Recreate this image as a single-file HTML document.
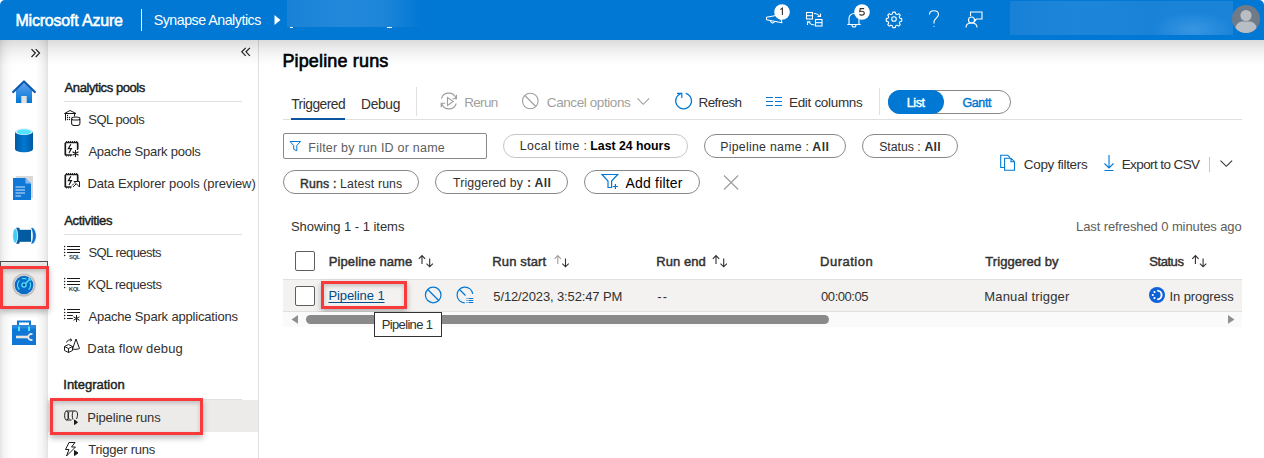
<!DOCTYPE html>
<html><head><meta charset="utf-8">
<style>
html,body{margin:0;padding:0;}
body{width:1264px;height:458px;overflow:hidden;position:relative;background:#fff;font-family:"Liberation Sans",sans-serif;}
.a{position:absolute;}
.t{position:absolute;white-space:nowrap;}
svg{position:absolute;overflow:visible;}
.pill{position:absolute;box-sizing:border-box;border:1px solid #8a8886;border-radius:12px;}
</style></head><body>

<!-- HEADER -->
<div class="a" style="left:0;top:0;width:1264px;height:40px;background:#0078d4;border-radius:5px 5px 0 0;"></div>
<div class="a" style="left:141px;top:9px;width:1px;height:22px;background:#fff;"></div>
<svg style="left:0;top:0" width="1264" height="40">
  <path d="M274.5 15 L280.5 20 L274.5 25 Z" fill="#fff"/>
</svg>
<div class="a" style="left:287px;top:0;width:136px;height:27px;background:linear-gradient(90deg,#1a82d6 0%,#2288da 40%,#1e86d9 70%,#0078d4 100%);"></div>
<div class="a" style="left:290px;top:27px;width:3px;height:1px;background:#fff;"></div>
<div class="a" style="left:387px;top:27px;width:5px;height:1px;background:#fff;"></div>
<div class="a" style="left:1010px;top:1px;width:223px;height:34px;background:radial-gradient(ellipse 40px 18px at 82% 85%,rgba(80,165,235,.55),rgba(80,165,235,0)),linear-gradient(90deg,#1880d6 0%,#1e86da 30%,#1a83d8 60%,#1b84d8 100%);"></div>
<!-- avatar -->
<svg style="left:1232px;top:5px" width="28" height="28" viewBox="0 0 28 28">
  <circle cx="14" cy="14" r="14" fill="#6f7b89"/>
  <circle cx="14" cy="10.5" r="5.6" fill="#b9bec4"/>
  <path d="M3.5 23 C4 18 8 16.5 11 16.5 L17 16.5 C20 16.5 24 18 24.5 23 C22 26.5 18 28 14 28 C10 28 6 26.5 3.5 23 Z" fill="#b9bec4"/>
</svg>
<!-- header icons -->
<svg style="left:0;top:0" width="1264" height="40" fill="none" stroke="#fff" stroke-width="1.1">
  <!-- megaphone -->
  <path d="M766.5 17.3 L780 14.8 L781.9 22.8 L766.5 19.8 Z" stroke-linejoin="round"/>
  <path d="M770.6 21 A2 2 0 0 0 774.4 21.8"/>
  <!-- switch directory -->
  <rect x="806.5" y="12.5" width="6" height="6.5"/>
  <path d="M806.5 15.7 H812.5"/>
  <rect x="815.5" y="19.5" width="6.5" height="6.5"/>
  <path d="M815.5 22.7 H822"/>
  <path d="M814 13.5 Q817 13 819.5 16 M820.5 13.5 V16.5 H817.5"/>
  <path d="M814.5 25 Q811 25 808.5 22 M807.5 25 V21.8 H810.5"/>
  <!-- bell -->
  <path d="M847.3 24.5 H860.7 M849 24.5 V18.5 A5 5 0 0 1 859 18.5 V24.5"/>
  <path d="M852 25 A2 2 0 0 0 856 25"/>
  <!-- gear -->
  <circle cx="894" cy="19" r="2.3"/>
  <path d="M892.6 11.2 L895.4 11.2 L895.9 13.2 L897.6 14 L899.4 12.9 L901.1 14.6 L900 16.4 L900.8 18.1 L902.8 18.6 L902.8 21.4 L900.8 21.9 L900 23.6 L901.1 25.4 L899.4 27.1 L897.6 26 L895.9 26.8 L895.4 28.8 L892.6 28.8 L892.1 26.8 L890.4 26 L888.6 27.1 L886.9 25.4 L888 23.6 L887.2 21.9 L885.2 21.4 L885.2 18.6 L887.2 18.1 L888 16.4 L886.9 14.6 L888.6 12.9 L890.4 14 L892.1 13.2 Z" transform="translate(894 19) scale(0.88) translate(-894 -19)" stroke-linejoin="round" stroke-width="1.25"/>
  <!-- help -->
  <path d="M929.5 14.5 C929.5 12 931.5 10.8 934 10.8 C936.7 10.8 938.5 12.5 938.5 14.6 C938.5 17.5 934 18.3 934 22 V23.6"/>
  <circle cx="934" cy="26.3" r="0.6" fill="#fff" stroke="none"/>
  <!-- feedback -->
  <path d="M970.5 16 V12 H982 V19 H976.5 L975 21 V19"/>
  <circle cx="971.5" cy="20" r="3"/>
  <path d="M966 27.5 C966 24.5 968.5 23 971.5 23 C974.5 23 977 24.5 977 27.5"/>
</svg>
<!-- badges -->
<svg style="left:0;top:0" width="1264" height="40">
  <circle cx="782" cy="12" r="7.8" fill="#fff"/>
  <circle cx="862" cy="12" r="7.8" fill="#fff"/>
</svg>
<svg style="left:0;top:0" width="1264" height="40"><path d="M780.4 9.6 L782.4 8.1 V14.9" fill="none" stroke="#323130" stroke-width="1.1"/></svg>
<svg style="left:0;top:0" width="1264" height="40"><path d="M864.1 8.6 H860.2 L859.8 11.6 C860.4 11.3 861 11.2 861.6 11.2 C863.2 11.2 864.3 12 864.3 13.2 C864.3 14.5 863.1 15.1 861.6 15.1 C860.8 15.1 860 14.9 859.4 14.6" fill="none" stroke="#323130" stroke-width="1.1"/></svg>

<!-- LEFT RAIL -->
<div class="a" style="left:0;top:40px;width:48px;height:418px;background:linear-gradient(90deg,#e4e4e4 0px,#f4f4f4 4px,#fcfcfc 9px,#fff 14px,#fff 36px,#f6f6f6 42px,#e8e8e8 47px,#dedede 48px);"></div>
<svg style="left:0;top:40px" width="48" height="418">
  <!-- » -->
  <path d="M31.5 49.2 L35.3 53.1 L31.5 57 M35.7 49.2 L39.5 53.1 L35.7 57" transform="translate(0,-40)" fill="none" stroke="#201f1e" stroke-width="1.2"/>
</svg>
<!-- home -->
<svg style="left:11px;top:79px" width="26" height="25" viewBox="0 0 26 25">
  <defs><linearGradient id="gh" x1="0" y1="0" x2="0" y2="1"><stop offset="0" stop-color="#5ea0ef"/><stop offset="1" stop-color="#0078d4"/></linearGradient></defs>
  <path d="M5 11 L13 4 L21 11 V24 H5 Z" fill="url(#gh)"/>
  <path d="M2.2 13 L13 2.5 L23.8 13" fill="none" stroke="#0c5aae" stroke-width="2.3" stroke-linejoin="round" stroke-linecap="round"/>
  <rect x="10.3" y="17" width="5.4" height="7" fill="#e2e2e2"/>
</svg>
<!-- database -->
<svg style="left:14px;top:127px" width="20" height="26" viewBox="0 0 20 26">
  <defs><linearGradient id="gd" x1="0" y1="0" x2="1" y2="0"><stop offset="0" stop-color="#005ba1"/><stop offset="0.5" stop-color="#0078d4"/><stop offset="1" stop-color="#005ba1"/></linearGradient></defs>
  <path d="M1 4.5 V22 C1 24 5 25.2 10 25.2 C15 25.2 19 24 19 22 V4.5 Z" fill="url(#gd)"/>
  <ellipse cx="10" cy="4.5" rx="9" ry="3.6" fill="#e8f3fb"/>
  <ellipse cx="10" cy="4.8" rx="7.3" ry="2.6" fill="#50e6ff"/>
</svg>
<!-- document -->
<svg style="left:12px;top:175px" width="23" height="26" viewBox="0 0 23 26">
  <path d="M4 1 H21 V23 H4 Z" fill="#d9d9d9"/>
  <path d="M1 3 H13.5 L19 8.5 V25 H1 Z" fill="#0f78d6"/>
  <path d="M13.5 3 V8.5 H19 Z" fill="#83b9f9"/>
  <path d="M3.5 12 H13 M3.5 15 H13 M3.5 18 H13 M3.5 21 H9" stroke="#cfe4fa" stroke-width="1"/>
</svg>
<!-- pipeline -->
<svg style="left:12px;top:227px" width="25" height="18" viewBox="0 0 25 18">
  <rect x="6.5" y="2.8" width="12.5" height="12" fill="#005ba1"/>
  <path d="M4 0.7 H7.3 C8 3 8.2 6 8.2 8.75 C8.2 11.5 8 14.5 7.3 16.8 H4 C5.3 14.5 5.8 11.5 5.8 8.75 C5.8 6 5.3 3 4 0.7 Z" fill="#0a5cab"/>
  <ellipse cx="3.2" cy="8.75" rx="2.4" ry="7.2" fill="#41cdf2" stroke="#f0f8fc" stroke-width=".5"/>
  <path d="M18.8 0.7 H21 C23 2.5 24.2 5.5 24.2 8.75 C24.2 12 23 15 21 16.8 H18.8 C20 14.5 20.6 11.8 20.6 8.75 C20.6 5.7 20 3 18.8 0.7 Z" fill="#0a72cc" stroke="#f4f8fc" stroke-width=".5"/>
</svg>
<!-- selected marker area -->
<div class="a" style="left:0;top:261px;width:48px;height:1px;background:#505050;"></div>
<div class="a" style="left:0;top:262px;width:48px;height:5px;background:#ebeae8;"></div>
<div class="a" style="left:0;top:261px;width:1px;height:5px;background:#505050;"></div>
<div class="a" style="left:47px;top:261px;width:1px;height:5px;background:#505050;"></div>
<div class="a" style="left:0;top:266px;width:49px;height:43px;box-sizing:border-box;border:3px solid #f83a3c;background:#ebeae8;box-shadow:0 3px 6px rgba(0,0,0,.28), inset 0 2px 4px rgba(0,0,0,.22);"></div>
<!-- monitor icon -->
<svg style="left:12px;top:273px" width="24" height="24" viewBox="0 0 24 24">
  <circle cx="12" cy="12" r="11.6" fill="#bdbdbd"/>
  <circle cx="12" cy="12" r="10.2" fill="#d9d9d9"/>
  <circle cx="12" cy="12" r="9.3" fill="#0b6cc7"/>
  <path d="M7.40 16.60 A6.5 6.5 0 0 1 7.40 7.40 M9.99 5.82 A6.5 6.5 0 0 1 14.43 5.97 M17.89 9.25 A6.5 6.5 0 0 1 16.60 16.60" fill="none" stroke="#50e6ff" stroke-width="1.1"/>
  <circle cx="12" cy="12" r="2.1" fill="#0a4f9a" stroke="#50e6ff" stroke-width="1.3"/>
  <path d="M13.5 10.5 L18.2 5.8 M16.4 5.2 L18.8 7.6" stroke="#50e6ff" stroke-width="1.3"/>
</svg>
<!-- toolbox -->
<svg style="left:11px;top:320px" width="26" height="26" viewBox="0 0 26 26">
  <path d="M7 5 V1.5 H19 V5" fill="none" stroke="#0f78d6" stroke-width="2"/>
  <rect x="1" y="5" width="24" height="20" fill="#0f78d6"/>
  <rect x="1" y="5" width="24" height="3.5" fill="#2b88da"/>
  <rect x="7" y="6.5" width="2" height="4.5" fill="#50e6ff"/>
  <rect x="17" y="6.5" width="2" height="4.5" fill="#50e6ff"/>
  <path d="M5 17 H18" stroke="#e8e6e3" stroke-width="2.6"/>
  <path d="M21.5 14.3 A3 3 0 1 0 21.5 19.7" fill="none" stroke="#e8e6e3" stroke-width="1.8"/>
</svg>

<!-- NAV PANEL -->
<div class="a" style="left:258px;top:40px;width:1px;height:418px;background:#e1dfdd;"></div>
<svg style="left:0;top:0" width="260" height="458" fill="none" stroke="#323130" stroke-width="1.1">
  <!-- « -->
  <path d="M245.7 47.8 L241.8 51.8 L245.7 55.8 M249.9 47.8 L246 51.8 L249.9 55.8" stroke="#201f1e" stroke-width="1.2"/>
</svg>
<div class="a" style="left:64px;top:101px;width:178px;height:1px;background:#e1dfdd;"></div>
<div class="a" style="left:64px;top:234px;width:178px;height:1px;background:#e1dfdd;"></div>
<div class="a" style="left:64px;top:399px;width:178px;height:1px;background:#e1dfdd;"></div>
<div class="a" style="left:48px;top:400px;width:210px;height:32px;background:#edebe9;"></div>
<div class="a" style="left:50px;top:398px;width:153px;height:37px;box-sizing:border-box;border:3px solid #f83a3c;box-shadow:0 3px 6px rgba(0,0,0,.28), inset 0 2px 4px rgba(0,0,0,.2);"></div>
<!-- nav icons -->
<svg style="left:0;top:0" width="260" height="458" fill="none" stroke="#1b1a19" stroke-width="1">
  <!-- SQL pools -->
  <path d="M64.5 113.5 L70 110.5 L76 113.5 Z M65.5 113.5 V120.5 M74.5 113.5 V116.5"/>
  <g fill="#1b1a19" stroke="none"><circle cx="67.5" cy="115.5" r=".65"/><circle cx="67.5" cy="117.5" r=".65"/><circle cx="69.5" cy="117.5" r=".65"/><circle cx="67.5" cy="119.5" r=".65"/><circle cx="69.5" cy="119.5" r=".65"/></g>
  <path d="M71.6 118.6 C71.6 116.4 79.9 116.4 79.9 118.6 V123.4 C79.9 126.1 71.6 126.1 71.6 123.4 Z M71.6 118.8 C72.2 120.5 79.3 120.5 79.9 118.8" stroke-width="1.05"/>
  <!-- Spark pools -->
  <path d="M65.5 142.5 H77.5 V150 M65.5 142.5 V155 H72" stroke-width="1.3"/>
  <path d="M66.5 141 V142 M68.5 141 V142 M70.5 141 V142 M72.5 141 V142 M74.5 141 V142 M76.5 141 V142 M64 144 H65 M64 146 H65 M64 148 H65 M64 150 H65 M64 152 H65 M64 154 H65 M78 144 H79 M78 146 H79 M78 148 H79 M66.5 155.5 V156.5 M68.5 155.5 V156.5 M70.5 155.5 V156.5" stroke-width="0.9"/>
  <path d="M70.8 144.2 L68.4 148.6 H71.4 L69 153" stroke-width="1.2"/>
  <path d="M75.5 150 V157 M72.5 151.8 L78.5 155.2 M78.5 151.8 L72.5 155.2" stroke-width="1.1"/>
  <!-- Data explorer pools -->
  <path d="M65.5 174.5 H77.5 V181 M65.5 174.5 V187 H71.5" stroke-width="1.3"/>
  <path d="M66.5 173 V174 M68.5 173 V174 M70.5 173 V174 M72.5 173 V174 M74.5 173 V174 M76.5 173 V174 M64 176 H65 M64 178 H65 M64 180 H65 M64 182 H65 M64 184 H65 M64 186 H65 M78 176 H79 M78 178 H79 M78 180 H79 M66.5 187.5 V188.5 M68.5 187.5 V188.5 M70.5 187.5 V188.5" stroke-width="0.9"/>
  <path d="M70.8 176.2 L68.4 180.6 H71.4 L69 185" stroke-width="1.2"/>
  <path d="M74 181.5 H79.5 V187 Z M73 187 L76 184 M72 185.5 L74 183.5"/>
  <!-- SQL requests -->
  <g fill="#1b1a19" stroke="none"><circle cx="64.6" cy="246.6" r=".75"/><circle cx="64.6" cy="249.5" r=".75"/><circle cx="64.6" cy="252.5" r=".75"/><circle cx="64.6" cy="255.5" r=".75"/></g>
  <path d="M67 246.5 H80 M67 249.5 H80 M67 252.5 H80"/>
  <!-- KQL requests -->
  <g fill="#1b1a19" stroke="none"><circle cx="64.6" cy="278.6" r=".75"/><circle cx="64.6" cy="281.5" r=".75"/><circle cx="64.6" cy="284.5" r=".75"/><circle cx="64.6" cy="287.5" r=".75"/></g>
  <path d="M67 278.5 H80 M67 281.5 H80 M67 284.5 H80"/>
  <!-- Spark apps -->
  <g fill="#1b1a19" stroke="none"><circle cx="64.6" cy="309.5" r=".75"/><circle cx="64.6" cy="312.5" r=".75"/><circle cx="64.6" cy="315.5" r=".75"/><circle cx="64.6" cy="318.5" r=".75"/></g>
  <path d="M67 309.5 H80 M67 312.5 H80 M67 315.5 H72.8 M67 318.5 H72.8"/>
  <path d="M76.5 315 V322 M73.5 316.8 L79.5 320.2 M79.5 316.8 L73.5 320.2" stroke-width="1"/>
  <!-- data flow debug -->
  <path d="M64.5 346.5 L68.5 344.5 L72.5 346.5 V350.5 L68.5 352.5 L64.5 350.5 Z M64.5 346.5 L68.5 348.5 L72.5 346.5 M68.5 348.5 V352.5"/>
  <path d="M72.5 349 L76 339 L79.5 348.5 C78 349.5 74 349.5 72.5 349"/>
  <path d="M66.5 342.5 C67 340.5 69 339.5 71.5 340 M70 338.7 L71.8 340 L70.3 341.5"/>
  <!-- pipeline runs -->
  <path d="M66.5 411 C64 411 64 420 66.5 420 C69 420 69 411 66.5 411 Z M66.5 411 H75.5 M66.5 420 H71.5 M69 412 C67.8 414 67.8 417 69 419"/>
  <path d="M75.5 411 C78 411 78 416 76.5 419 M73 411.5 C72 414 72 417 73 419.5"/>
  <path d="M74.5 420 V424.5 L77.5 422.3 Z" fill="#1b1a19"/>
  <!-- trigger runs -->
  <path d="M69 442.5 H75 L71.5 447 H75.5 L66.5 456 L69 449.5 H65.5 Z"/>
  <path d="M74.5 450.5 V455.5 L78 453 Z" fill="#1b1a19"/>
</svg>
<div class="t" style="left:69px;top:253.5px;font-size:6px;line-height:6px;font-weight:bold;color:#444;letter-spacing:-.4px;">SQL</div>
<div class="t" style="left:68.8px;top:285.5px;font-size:6px;line-height:6px;font-weight:bold;color:#444;letter-spacing:-.5px;">KQL</div>

<!-- MAIN CONTENT -->
<div class="a" style="left:283px;top:119px;width:959px;height:1px;background:#e1dfdd;"></div>
<div class="a" style="left:291px;top:118px;width:54px;height:2px;background:#0a54a0;"></div>
<div class="a" style="left:416px;top:87px;width:1px;height:29px;background:#e1dfdd;"></div>
<div class="a" style="left:879px;top:88px;width:1px;height:27px;background:#e1dfdd;"></div>
<!-- toolbar icons -->
<svg style="left:0;top:0" width="1264" height="458" fill="none" stroke-width="1.1">
  <!-- rerun -->
  <g stroke="#a19f9d">
    <path d="M441.5 98.5 A7.5 7.2 0 0 1 456 98.5 M456.5 94.8 V98.8 H452.5"/>
    <path d="M456.2 103.5 A7.5 7.2 0 0 1 441.7 103.5 M441.2 107.2 V103.2 H445.2"/>
    <path d="M447.5 97.5 V105.5 L453.2 101.5 Z"/>
    <!-- cancel -->
    <circle cx="530.3" cy="101" r="7.8"/>
    <path d="M524.8 95.5 L535.8 106.5"/>
    <!-- chevron -->
    <path d="M637.5 98.3 L643.3 104.3 L649.1 98.3"/>
  </g>
  <g stroke="#0078d4">
    <!-- refresh -->
    <path d="M685.7 93.3 A7.9 7.9 0 1 1 681.5 93.3" stroke-width="1.2"/>
    <path d="M677 93.3 H681.8 V98" stroke-width="1.2"/>
    <!-- edit columns -->
    <path d="M766 97.5 H773 M766 101.5 H773 M766 105.5 H773 M775 97.5 H782 M775 101.5 H782 M775 105.5 H782"/>
    <!-- copy -->
    <path d="M1004.5 167.5 H1000.7 V155.2 H1007.7 L1010 157.6"/>
    <path d="M1004.6 158.2 H1011 L1014.5 161.7 V170.3 H1004.6 Z M1011 158.2 V161.7 H1014.5"/>
    <!-- export -->
    <path d="M1109 155 V168 M1104.5 163.5 L1109 168 L1113.5 163.5 M1104.5 170.5 H1113.5"/>
    <!-- search filter icon -->
    <path d="M290 141.5 H300.5 L296.8 145.5 V150.8 L293.7 149.3 V145.5 Z" stroke-width="1"/>
    <!-- add filter -->
    <path d="M602 174.5 H617.7 L611.6 181 V187.5 H608 V181 Z" stroke-width="1.2"/>
    <path d="M612.8 186.5 H618 M615.4 183.9 V189.1" stroke-width="1.2"/>
  </g>
  <g stroke="#a19f9d" stroke-width="1.2">
    <path d="M724 175.5 L738.2 189.5 M738.2 175.5 L724 189.5"/>
  </g>
  <!-- export chevron -->
  <path d="M1220.5 160.7 L1226.3 166.3 L1232.1 160.7" stroke="#323130" stroke-width="1.1"/>
  <!-- sort icons -->
  <g stroke-width="1.1">
  <path d="M422.0 255.6 V264 M418.8 258.8 L422.0 255.6 L425.2 258.8" stroke="#323130"/><path d="M429.7 258.5 V266.8 M426.5 263.6 L429.7 266.8 L432.9 263.6" stroke="#323130"/>
  <path d="M557.8 255.6 V264 M554.6 258.8 L557.8 255.6 L561.0 258.8" stroke="#a19f9d"/><path d="M565.5 258.5 V266.8 M562.3 263.6 L565.5 266.8 L568.7 263.6" stroke="#323130"/>
  <path d="M716.0 255.6 V264 M712.8 258.8 L716.0 255.6 L719.2 258.8" stroke="#323130"/><path d="M723.7 258.5 V266.8 M720.5 263.6 L723.7 266.8 L726.9 263.6" stroke="#323130"/>
  <path d="M1195.4 255.6 V264 M1192.2 258.8 L1195.4 255.6 L1198.6 258.8" stroke="#323130"/><path d="M1203.1 258.5 V266.8 M1199.9 263.6 L1203.1 266.8 L1206.3 263.6" stroke="#323130"/>
  </g>
</svg>
<div class="a" style="left:1209px;top:157px;width:1px;height:15px;background:#c8c6c4;"></div>

<!-- toggle -->
<div class="a" style="left:888px;top:90px;width:123px;height:24px;box-sizing:border-box;border:1px solid #8a8886;border-radius:12px;"></div>
<div class="a" style="left:888px;top:90px;width:56px;height:24px;background:#0078d4;border-radius:12px;"></div>

<!-- filter row -->
<div class="a" style="left:283px;top:133px;width:204px;height:26px;box-sizing:border-box;border:1px solid #8a8886;border-radius:2px;"></div>
<div class="pill" style="left:503px;top:134px;width:185px;height:24px;border-color:#c8c6c4;"></div>
<div class="pill" style="left:704px;top:134px;width:142px;height:24px;"></div>
<div class="pill" style="left:862px;top:134px;width:96px;height:24px;"></div>
<div class="pill" style="left:283px;top:170px;width:136px;height:24px;"></div>
<div class="pill" style="left:435px;top:170px;width:133px;height:24px;"></div>
<div class="pill" style="left:584px;top:170px;width:116px;height:24px;"></div>

<!-- table -->
<div class="a" style="left:295px;top:251px;width:20px;height:20px;box-sizing:border-box;border:1px solid #605e5c;border-radius:2px;"></div>
<div class="a" style="left:283px;top:279px;width:959px;height:33px;box-sizing:border-box;background:#f3f2f1;border-top:1px solid #e1dfdd;border-bottom:1px solid #e1dfdd;"></div>
<div class="a" style="left:295px;top:286px;width:20px;height:20px;box-sizing:border-box;border:1px solid #605e5c;border-radius:2px;background:#fff;"></div>
<div class="a" style="left:321px;top:281px;width:86px;height:28px;box-sizing:border-box;border:3px solid #f83a3c;box-shadow:0 3px 6px rgba(0,0,0,.28), inset 0 2px 4px rgba(0,0,0,.2);"></div>
<svg style="left:0;top:0" width="1264" height="458" fill="none" stroke="#0078d4">
    <circle cx="433.2" cy="295" r="7.8" stroke-width="1.2"/>
    <path d="M427.7 289.5 L438.7 300.5" stroke-width="1.2"/>
    <path d="M472.8 294 A7.9 7.9 0 1 0 464.8 302.9" stroke-width="1.2"/>
    <path d="M459.5 289.5 L465.5 295.5" stroke-width="1.2"/>
    <path d="M466.5 298.5 h1 M466.5 300.5 h1 M466.5 302.5 h1 M468.5 298.5 H473.3 M468.5 300.5 H473.3 M468.5 302.5 H473.3" stroke-width="1"/>
</svg>
<svg style="left:0;top:0" width="1264" height="458">
  <circle cx="1157" cy="295" r="8" fill="#0f62d6"/>
  <path d="M1157.2 290.6 A4.4 4.4 0 0 1 1157.2 299.4" fill="none" stroke="#fff" stroke-width="1.9"/>
  <circle cx="1154.5" cy="292" r="1.1" fill="#fff"/>
  <circle cx="1152.8" cy="295" r="1.1" fill="#fff"/>
  <circle cx="1154.5" cy="298.1" r="1.1" fill="#fff"/>
</svg>
<!-- scrollbar -->
<div class="a" style="left:283px;top:312px;width:959px;height:15px;background:#fafafa;"></div>
<svg style="left:0;top:0" width="1264" height="458">
  <path d="M298 315 L291.5 319.4 L298 323.8 Z" fill="#8f8f8f"/>
  <path d="M1228 315 L1234.5 319.4 L1228 323.8 Z" fill="#8f8f8f"/>
</svg>
<div class="a" style="left:306px;top:315px;width:523px;height:9px;border-radius:4.5px;background:#8a8a8a;"></div>
<!-- tooltip -->
<div class="a" style="left:374px;top:312px;width:68px;height:25px;box-sizing:border-box;border:1px solid #333;background:#fff;"></div>

<!-- header shadow -->
<div class="a" style="left:0;top:40px;width:1264px;height:26px;background:linear-gradient(180deg,rgba(0,0,0,.14) 0%,rgba(0,0,0,.07) 35%,rgba(0,0,0,.02) 75%,rgba(0,0,0,0) 100%);"></div>

<div class="t" style="left:15.40px;top:10.00px;font-size:16px;line-height:21px;letter-spacing:-0.189px;color:#fff;-webkit-text-stroke:0.55px #fff;">Microsoft Azure</div>
<div class="t" style="left:153.70px;top:11.00px;font-size:14.2px;line-height:18px;letter-spacing:-0.471px;color:#fff;">Synapse Analytics</div>
<div class="t" style="left:64.60px;top:79.00px;font-size:13px;line-height:17px;letter-spacing:-0.429px;color:#201f1e;-webkit-text-stroke:0.45px #201f1e;">Analytics pools</div>
<div class="t" style="left:88.20px;top:111.00px;font-size:13px;line-height:17px;letter-spacing:-0.450px;color:#323130;">SQL pools</div>
<div class="t" style="left:88.40px;top:143.00px;font-size:13px;line-height:17px;letter-spacing:-0.233px;color:#323130;">Apache Spark pools</div>
<div class="t" style="left:87.40px;top:175.00px;font-size:13px;line-height:17px;letter-spacing:-0.104px;color:#323130;">Data Explorer pools (preview)</div>
<div class="t" style="left:64.30px;top:212.00px;font-size:13px;line-height:17px;letter-spacing:-0.343px;color:#201f1e;-webkit-text-stroke:0.45px #201f1e;">Activities</div>
<div class="t" style="left:88.40px;top:244.00px;font-size:13px;line-height:17px;letter-spacing:-0.526px;color:#323130;">SQL requests</div>
<div class="t" style="left:87.40px;top:276.00px;font-size:13px;line-height:17px;letter-spacing:-0.399px;color:#323130;">KQL requests</div>
<div class="t" style="left:88.40px;top:308.00px;font-size:13px;line-height:17px;letter-spacing:-0.176px;color:#323130;">Apache Spark applications</div>
<div class="t" style="left:87.20px;top:340.00px;font-size:13px;line-height:17px;letter-spacing:0.113px;color:#323130;">Data flow debug</div>
<div class="t" style="left:63.30px;top:376.00px;font-size:13px;line-height:17px;letter-spacing:-0.010px;color:#201f1e;-webkit-text-stroke:0.45px #201f1e;">Integration</div>
<div class="t" style="left:87.20px;top:409.00px;font-size:13px;line-height:17px;letter-spacing:-0.138px;color:#323130;">Pipeline runs</div>
<div class="t" style="left:88.20px;top:441.00px;font-size:13px;line-height:17px;letter-spacing:-0.227px;color:#323130;">Trigger runs</div>
<div class="t" style="left:282.40px;top:50.00px;font-size:18px;line-height:23px;letter-spacing:0.153px;color:#000;-webkit-text-stroke:0.62px #000;">Pipeline runs</div>
<div class="t" style="left:291.20px;top:96.00px;font-size:13.8px;line-height:18px;letter-spacing:-0.508px;color:#323130;">Triggered</div>
<div class="t" style="left:361.00px;top:96.00px;font-size:13.8px;line-height:18px;letter-spacing:-0.321px;color:#323130;">Debug</div>
<div class="t" style="left:464.20px;top:94.00px;font-size:13.5px;line-height:18px;letter-spacing:-0.665px;color:#a19f9d;">Rerun</div>
<div class="t" style="left:546.80px;top:94.00px;font-size:13.5px;line-height:18px;letter-spacing:-0.412px;color:#a19f9d;">Cancel options</div>
<div class="t" style="left:698.50px;top:94.00px;font-size:13.5px;line-height:18px;letter-spacing:-0.610px;color:#323130;">Refresh</div>
<div class="t" style="left:789.00px;top:94.00px;font-size:13.5px;line-height:18px;letter-spacing:-0.321px;color:#323130;">Edit columns</div>
<div class="t" style="left:906.70px;top:95.00px;font-size:12.5px;line-height:16px;letter-spacing:-0.360px;color:#fff;-webkit-text-stroke:0.43px #fff;">List</div>
<div class="t" style="left:962.50px;top:95.00px;font-size:12.5px;line-height:16px;letter-spacing:-0.400px;color:#0078d4;-webkit-text-stroke:0.43px #0078d4;">Gantt</div>
<div class="t" style="left:308.30px;top:140.00px;font-size:12.5px;line-height:16px;letter-spacing:0.224px;color:#605e5c;">Filter by run ID or name</div>
<div class="t" style="left:519.70px;top:138.00px;font-size:12.3px;line-height:16px;letter-spacing:0.394px;color:#323130;">Local time :</div>
<div class="t" style="left:590.30px;top:138.00px;font-size:12.3px;line-height:16px;letter-spacing:-0.001px;color:#000;font-weight:bold;">Last 24 hours</div>
<div class="t" style="left:720.20px;top:139.00px;font-size:12.3px;line-height:16px;letter-spacing:0.282px;color:#323130;">Pipeline name :</div>
<div class="t" style="left:812.30px;top:139.00px;font-size:12.3px;line-height:16px;letter-spacing:0.452px;color:#323130;font-weight:bold;">All</div>
<div class="t" style="left:879.20px;top:139.00px;font-size:12.3px;line-height:16px;letter-spacing:-0.025px;color:#323130;">Status :</div>
<div class="t" style="left:924.40px;top:139.00px;font-size:12.3px;line-height:16px;letter-spacing:0.302px;color:#323130;font-weight:bold;">All</div>
<div class="t" style="left:1023.80px;top:156.00px;font-size:13.5px;line-height:18px;letter-spacing:-0.334px;color:#323130;">Copy filters</div>
<div class="t" style="left:1121.70px;top:156.00px;font-size:13.5px;line-height:18px;letter-spacing:-0.594px;color:#323130;">Export to CSV</div>
<div class="t" style="left:299.90px;top:176.00px;font-size:12.3px;line-height:16px;letter-spacing:0.195px;color:#323130;-webkit-text-stroke:0.43px #323130;">Runs :</div>
<div class="t" style="left:340.10px;top:176.00px;font-size:12.3px;line-height:16px;letter-spacing:0.131px;color:#323130;">Latest runs</div>
<div class="t" style="left:453.10px;top:175.00px;font-size:12.3px;line-height:16px;letter-spacing:0.116px;color:#323130;">Triggered by</div>
<div class="t" style="left:527.00px;top:175.00px;font-size:12.3px;line-height:16px;letter-spacing:0.273px;color:#323130;font-weight:bold;">: All</div>
<div class="t" style="left:625.50px;top:174.00px;font-size:14px;line-height:18px;letter-spacing:0.190px;color:#000;">Add filter</div>
<div class="t" style="left:290.90px;top:218.00px;font-size:13px;line-height:17px;letter-spacing:-0.037px;color:#323130;">Showing 1 - 1 items</div>
<div class="t" style="left:1076.00px;top:218.00px;font-size:13px;line-height:17px;letter-spacing:-0.098px;color:#605e5c;">Last refreshed 0 minutes ago</div>
<div class="t" style="left:328.80px;top:253.00px;font-size:13px;line-height:17px;letter-spacing:0.087px;color:#323130;-webkit-text-stroke:0.45px #323130;">Pipeline name</div>
<div class="t" style="left:492.30px;top:253.00px;font-size:13px;line-height:17px;letter-spacing:0.134px;color:#323130;-webkit-text-stroke:0.45px #323130;">Run start</div>
<div class="t" style="left:656.20px;top:253.00px;font-size:13px;line-height:17px;letter-spacing:0.080px;color:#323130;-webkit-text-stroke:0.45px #323130;">Run end</div>
<div class="t" style="left:820.10px;top:253.00px;font-size:13px;line-height:17px;letter-spacing:0.485px;color:#323130;-webkit-text-stroke:0.45px #323130;">Duration</div>
<div class="t" style="left:985.30px;top:253.00px;font-size:13px;line-height:17px;letter-spacing:0.064px;color:#323130;-webkit-text-stroke:0.45px #323130;">Triggered by</div>
<div class="t" style="left:1149.30px;top:253.00px;font-size:13px;line-height:17px;letter-spacing:-0.451px;color:#323130;-webkit-text-stroke:0.45px #323130;">Status</div>
<div class="t" style="left:328.40px;top:287.00px;font-size:13px;line-height:17px;letter-spacing:-0.096px;color:#004c87;text-decoration:underline;text-underline-offset:2px;text-decoration-skip-ink:none;">Pipeline 1</div>
<div class="t" style="left:493.30px;top:288.00px;font-size:13px;line-height:17px;letter-spacing:-0.126px;color:#323130;">5/12/2023, 3:52:47 PM</div>
<div class="t" style="left:657.20px;top:288.00px;font-size:13px;line-height:17px;letter-spacing:1.171px;color:#323130;">--</div>
<div class="t" style="left:821.10px;top:288.00px;font-size:13px;line-height:17px;letter-spacing:-0.453px;color:#323130;">00:00:05</div>
<div class="t" style="left:984.30px;top:288.00px;font-size:13px;line-height:17px;letter-spacing:0.141px;color:#323130;">Manual trigger</div>
<div class="t" style="left:1169.40px;top:288.00px;font-size:13px;line-height:17px;letter-spacing:-0.073px;color:#323130;">In progress</div>
<div class="t" style="left:381.80px;top:316.00px;font-size:13px;line-height:17px;letter-spacing:-0.663px;color:#323130;">Pipeline 1</div>
</body></html>
